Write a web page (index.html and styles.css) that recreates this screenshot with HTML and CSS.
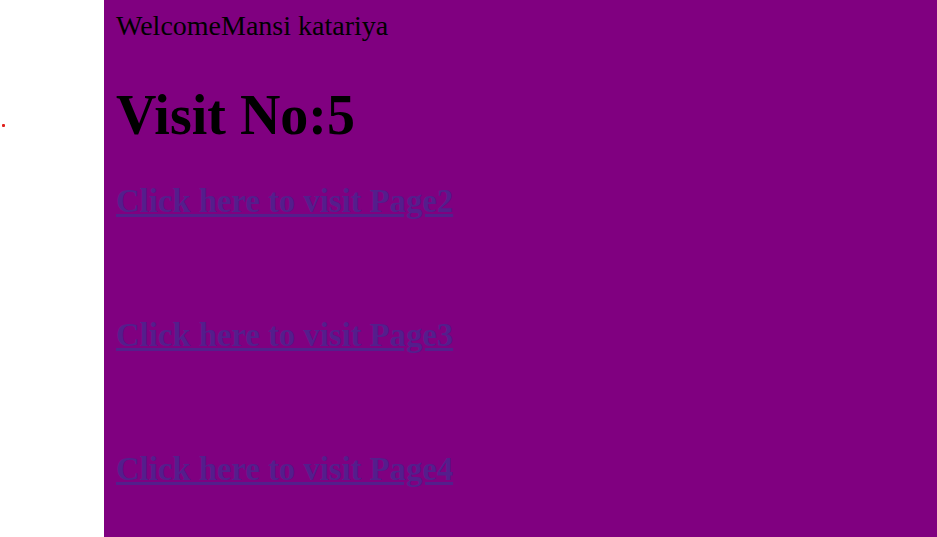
FILE: index.html
```html
<!DOCTYPE html>
<html>
<head>
<meta charset="utf-8">
<link rel="stylesheet" href="styles.css">
</head>
<body>
<div class="page">
  <aside class="side"><span class="dot"></span></aside>
  <main class="main">
    <div class="welcome">WelcomeMansi katariya</div>
    <h1 class="visit">Visit No:5</h1>
    <h2 class="link-row first"><a href="#" class="link">Click here to visit Page2</a></h2>
    <h2 class="link-row"><a href="#" class="link">Click here to visit Page3</a></h2>
    <h2 class="link-row"><a href="#" class="link">Click here to visit Page4</a></h2>
  </main>
</div>
</body>
</html>
```
FILE: styles.css
```css
html, body {
  margin: 0;
  padding: 0;
  height: 100%;
  overflow: hidden;
  background: #ffffff;
  font-family: "Liberation Serif", "Times New Roman", serif;
}
.page {
  display: flex;
  height: 100vh;
}
.side {
  width: 104px;
  flex: 0 0 104px;
  padding: 124px 0 0 2px;
  box-sizing: border-box;
}
.dot {
  display: block;
  width: 3px;
  height: 3px;
  background: #e0201c;
  border-radius: 1px;
}
.main {
  flex: 1;
  background: #800080;
  padding: 10px 0 0 12px;
  box-sizing: border-box;
  color: #000;
}
.welcome {
  font-size: 28px;
  line-height: 32px;
  margin: 0;
}
.visit {
  font-size: 56px;
  line-height: 62px;
  font-weight: bold;
  margin: 42px 0 0 0;
}
.link-row {
  font-size: 32.7px;
  line-height: 36px;
  font-weight: bold;
  margin: 98px 0 0 0;
}
.link-row.first {
  margin-top: 37px;
}
.link {
  color: #541e8c;
  text-decoration: underline;
}
```
